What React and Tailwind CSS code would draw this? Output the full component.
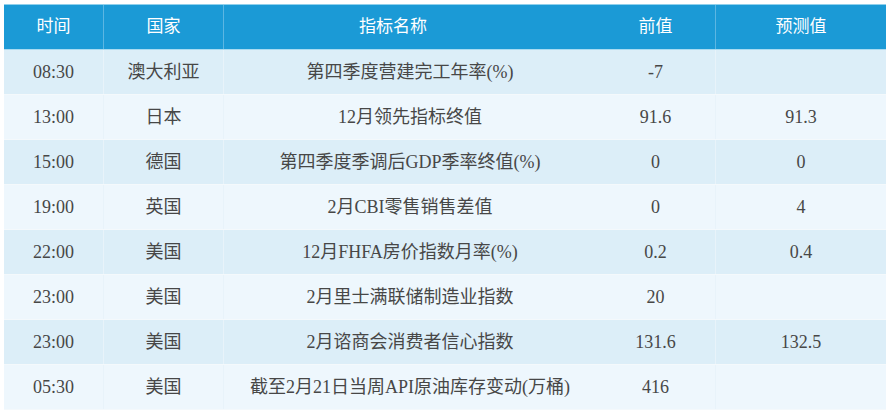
import React from 'react';

const rows = [
    { time: '08:30', country: '澳大利亚', name: '第四季度营建完工年率(%)', prev: '-7', forecast: '' },
    { time: '13:00', country: '日本', name: '12月领先指标终值', prev: '91.6', forecast: '91.3' },
    { time: '15:00', country: '德国', name: '第四季度季调后GDP季率终值(%)', prev: '0', forecast: '0' },
    { time: '19:00', country: '英国', name: '2月CBI零售销售差值', prev: '0', forecast: '4' },
    { time: '22:00', country: '美国', name: '12月FHFA房价指数月率(%)', prev: '0.2', forecast: '0.4' },
    { time: '23:00', country: '美国', name: '2月里士满联储制造业指数', prev: '20', forecast: '' },
    { time: '23:00', country: '美国', name: '2月谘商会消费者信心指数', prev: '131.6', forecast: '132.5' },
    { time: '05:30', country: '美国', name: '截至2月21日当周API原油库存变动(万桶)', prev: '416', forecast: '' },
];

const font = { fontFamily: '"Liberation Serif", "Noto Sans CJK SC", serif' };

export default function App() {
    return (
        <div className="w-[892px] h-[410px] bg-white pt-[4px] pl-[4px]" style={font}>
            <div className="w-[882px] border-t border-[#8fd0ec]">
                {/* Header */}
                <div className="flex h-[45px] bg-[#1b9ad6] text-white text-[17px] border-b border-[#a9dbf1]">
                    <div className="w-[100px] flex items-center justify-center border-r border-[#5cb6e2]">时间</div>
                    <div className="w-[120px] flex items-center justify-center border-r border-[#5cb6e2]">国家</div>
                    <div className="w-[372px] flex items-center justify-center pr-[34px]">指标名称</div>
                    <div className="w-[120px] flex items-center justify-center border-r border-[#5cb6e2]">前值</div>
                    <div className="w-[170px] flex items-center justify-center">预测值</div>
                </div>

                {/* Rows */}
                {rows.map((r, i) => (
                    <div
                        key={i}
                        className={`flex h-[45px] text-[18px] text-[#474747] border-b border-[#f4f9fc] ${i % 2 === 0 ? 'bg-[#dceef8]' : 'bg-[#eef7fd]'}`}
                    >
                        <div className="w-[100px] flex items-center justify-center border-r border-[#e8f3fa]">{r.time}</div>
                        <div className="w-[120px] flex items-center justify-center border-r border-[#e8f3fa]">{r.country}</div>
                        <div className="w-[372px] flex items-center justify-center">{r.name}</div>
                        <div className="w-[120px] flex items-center justify-center border-r border-[#e8f3fa]">{r.prev}</div>
                        <div className="w-[170px] flex items-center justify-center">{r.forecast}</div>
                    </div>
                ))}
            </div>
        </div>
    );
}
